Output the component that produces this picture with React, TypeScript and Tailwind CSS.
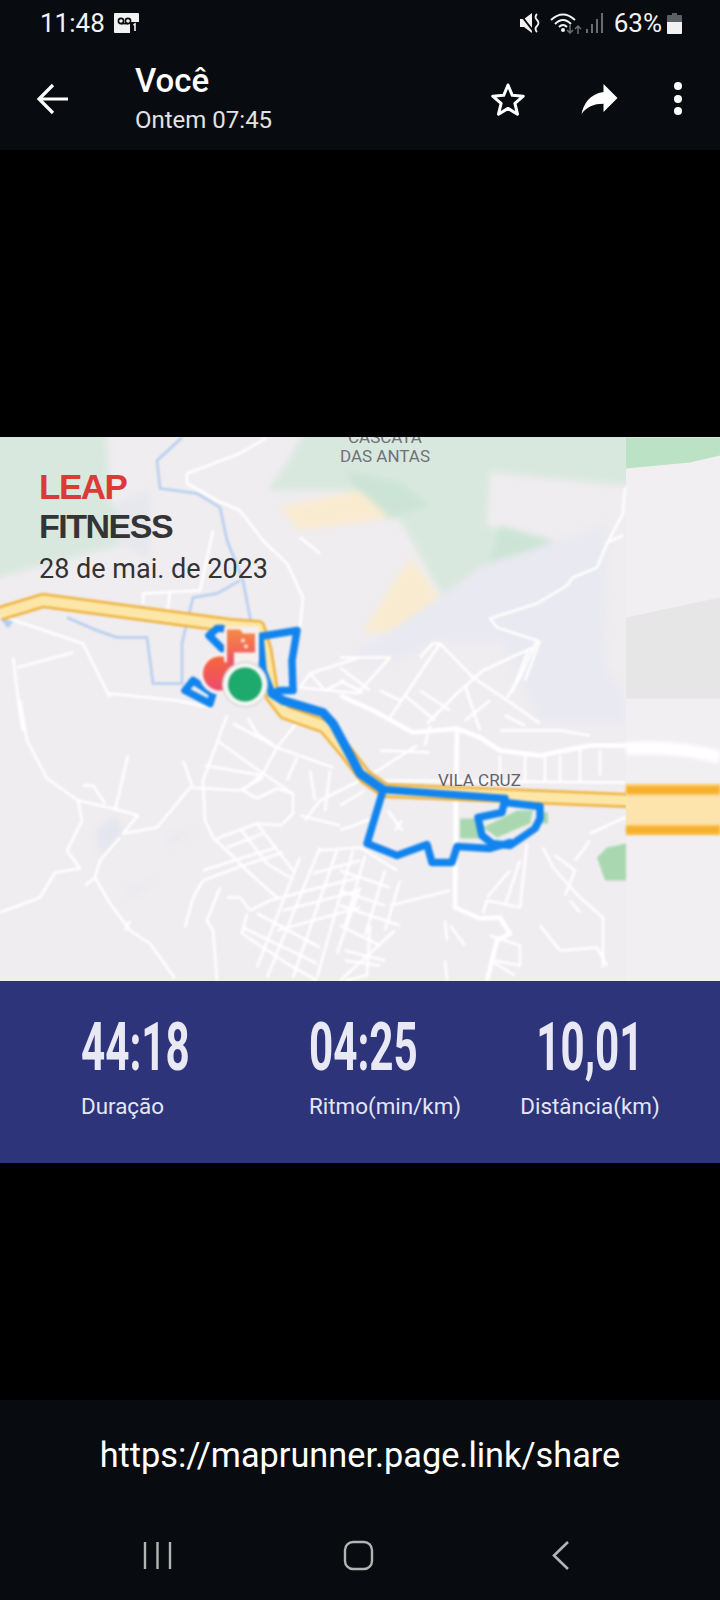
const majorRoads = [
  "340,695 373,710 413,732 457,728 480,737 500,750 540,755 590,745 627,745",
  "457,728 456,790 455,907 480,918 500,917 510,933 497,940 487,980",
];
const minorRoads = [
  "0,615 83,643 100,677 110,697",
  "20,700 27,740 47,778 78,800 113,808 138,815 123,833 157,827 190,787 240,790 263,777",
  "267,437 240,453 187,473 187,483 217,500 240,510 263,540 287,563 303,597 300,627",
  "213,530 200,590 143,593 143,603",
  "170,590 167,617",
  "300,537 320,553",
  "17,667 73,652",
  "13,657 20,713 23,730",
  "110,693 177,700 210,707",
  "360,657 310,673 300,687 360,693",
  "310,673 325,690 345,680",
  "78,800 82,820 67,850 80,868 55,872 40,897 0,912",
  "128,755 115,810",
  "83,785 93,785 105,803",
  "120,837 100,860 95,877 110,903 130,930 150,943 175,978",
  "95,877 85,885",
  "130,920 125,930",
  "183,760 192,785",
  "227,715 203,780 205,820 213,837 240,863 250,873 277,897",
  "233,723 277,747 333,767",
  "217,740 263,773 293,793 293,813 283,823",
  "205,765 263,775",
  "277,747 263,773 243,790 257,798 277,788 293,793",
  "297,722 277,747",
  "297,757 287,780",
  "248,718 257,733 277,747",
  "310,770 315,800",
  "330,770 325,810",
  "360,780 320,800 305,820",
  "300,815 340,825",
  "203,870 240,858 277,847",
  "217,838 257,823 283,825",
  "203,880 243,865 283,852",
  "227,847 263,833",
  "240,828 267,863 290,877",
  "257,823 293,870",
  "203,880 193,897 185,927",
  "220,887 207,920 213,930 217,980",
  "227,897 240,897 250,910",
  "247,913 242,933 287,963 317,980",
  "250,910 270,900 320,887",
  "320,847 267,977",
  "337,850 293,977",
  "300,857 257,967",
  "353,850 317,977",
  "360,887 337,953",
  "320,850 360,847",
  "313,873 360,860",
  "307,890 360,877",
  "283,910 360,890",
  "277,930 360,907",
  "243,927 317,963",
  "257,913 320,947",
  "360,847 397,870",
  "340,870 390,887",
  "340,890 385,905",
  "365,855 345,925",
  "385,870 365,935",
  "400,880 385,930",
  "340,905 400,925",
  "340,925 380,945",
  "390,905 450,890",
  "395,930 340,980",
  "370,925 367,975 345,980",
  "345,950 385,960",
  "625,487 623,513 607,543 597,567 573,577 567,585 537,603 490,618 497,627 537,640 520,677 507,697",
  "607,542 623,535",
  "420,657 433,643 440,643 473,677 503,697 540,723",
  "440,643 390,717",
  "533,647 483,670 457,693 427,723",
  "540,640 525,680",
  "528,650 512,692",
  "340,657 390,657 360,690",
  "340,680 363,692",
  "340,667 370,690",
  "420,690 450,710",
  "405,695 435,720",
  "465,685 480,730",
  "500,730 560,730 590,735",
  "490,700 465,720",
  "505,715 525,725",
  "380,690 400,700",
  "430,725 425,745",
  "380,750 430,752",
  "370,775 417,745",
  "380,780 625,782",
  "500,755 500,782",
  "525,755 525,782",
  "545,755 545,782",
  "560,755 560,782",
  "580,748 580,782",
  "600,750 600,775",
  "340,805 365,790",
  "340,830 380,815",
  "388,810 402,830",
  "402,820 395,830",
  "527,843 520,907 487,900 483,913",
  "510,870 487,897",
  "520,860 505,905",
  "543,847 553,867 580,897 603,917 603,967",
  "555,855 575,870 565,895",
  "590,833 625,817",
  "575,860 590,840",
  "540,925 560,950 597,947",
  "597,947 607,965",
  "570,900 580,912",
  "490,935 520,945 520,965 495,960",
  "490,960 515,975",
  "450,925 465,945",
  "445,920 447,940",
  "345,960 380,965",
  "445,960 447,980",
];

const HIGHWAY = "M0 613 L43 600 L230 625 L258 627 L265 650 L272 695 L285 712 L325 726 L345 750 L365 776 L385 790 L480 794 L627 800";

const MapDrawing = () => (
  <svg viewBox="0 437 720 543" className="block h-full w-full">
    <defs>
      <linearGradient id="flag" x1="0" y1="0" x2="0" y2="1">
        <stop offset="0" stopColor="#f58a42" />
        <stop offset="1" stopColor="#ef4f6a" />
      </linearGradient>
      <linearGradient id="redDot" x1="0" y1="0" x2="0" y2="1">
        <stop offset="0" stopColor="#f5683a" />
        <stop offset="1" stopColor="#ee4a6e" />
      </linearGradient>
    </defs>
    <rect x="0" y="437" width="720" height="543" fill="#f0edf0" />
    {/* land cover */}
    <g className="blur-[3px]">
      <polygon points="-20,420 107,420 110,500 147,540 100,550 -20,582" fill="#d9e8df" />
      <polygon points="310,420 640,420 640,487 490,472 487,525 563,543 480,567 443,597 400,520 360,490 267,490 285,465" fill="#d9e8df" />
      <polygon points="345,470 400,482 430,505 385,520 360,495" fill="#cce4d6" />
      <polygon points="490,560 563,543 500,525" fill="#cce4d6" />
      <polygon points="280,507 360,490 390,517 300,530" fill="#f9ebd0" />
      <polygon points="410,557 442,600 413,630 363,632" fill="#f9ebd0" />
      <polygon points="480,567 607,523 604,660 625,700 625,722 540,720 500,640 440,640 400,660 345,660 420,610" fill="#e9e9f1" />
      <polygon points="120,500 150,490 150,560 115,540" fill="#e6e8ee" />
      <polygon points="95,830 115,815 125,830 100,855" fill="#e4e6ee" />
      <polygon points="170,835 195,828 170,845" fill="#e8e9ee" />
      <polygon points="125,890 155,880 130,898" fill="#e8e9ee" />
    </g>
    {/* right strip */}
    <rect x="626" y="437" width="94" height="543" fill="#f1eff1" />
    <polygon points="626,437 720,437 720,455 690,462 626,468" fill="#bce2c5" />
    <polygon points="626,617 720,597 720,698 626,698" fill="#e6e6e6" />
    <g className="blur-[0.8px]">
      {/* parks */}
      <polygon points="460,818 476,818 485,838 460,838" fill="#a9d8b0" />
      <polygon points="483,827 517,810 533,810 530,823 497,837" fill="#a9d8b0" />
      <polygon points="541,812 548,812 548,823 541,823" fill="#a9d8b0" />
      <polygon points="597,857 607,847 626,843 626,880 605,880" fill="#a9d8b0" />
      {/* water */}
      <polyline points="182,437 157,460 160,488 197,493 220,507 227,540 243,580 252,627" fill="none" stroke="#b4cdf0" strokeWidth="2.5" />
      <polyline points="240,580 217,593 193,597 182,643 182,683 153,683 147,637 117,637 97,630 67,617" fill="none" stroke="#b4cdf0" strokeWidth="2.5" />
      <polygon points="0,618 14,620 8,628" fill="#b4cdf0" />
      {/* roads */}
      {minorRoads.map((p) => (
        <polyline key={p} points={p} fill="none" stroke="#ffffff" strokeWidth="2.6" strokeLinejoin="round" />
      ))}
      {majorRoads.map((p) => (
        <polyline key={p} points={p} fill="none" stroke="#ffffff" strokeWidth="4.6" strokeLinejoin="round" />
      ))}
      {/* highway */}
      <path d={HIGHWAY} fill="none" stroke="#eeb13c" strokeWidth="15" strokeLinejoin="round" />
      <path d={HIGHWAY} fill="none" stroke="#fde7a8" strokeWidth="10" strokeLinejoin="round" />
      {/* route */}
      <g fill="none" stroke="#1284ee" strokeWidth="7.5" strokeLinejoin="round" strokeLinecap="round">
        <path d="M383 789 L505 798 L502 812 L478 817 L482 835 L492 843 L510 845 L535 828 L540 818 L540 806 L505 802" />
        <path d="M383 790 L367 843 L397 855 L427 844 L432 862 L452 862 L457 846 L490 848 L510 842" />
        <path d="M272 693 L283 700 L323 712 L333 723 L360 773 L383 789" strokeWidth="9" />
        <path d="M260 636 L297 630 L292 660 L293 690 L280 690 L272 693 L263 670 L260 636" />
        <path d="M222 628 L217 628 L209 635 L222 648" />
        <path d="M193 680 L185 690 L210 703 L213 693 Z" />
      </g>
      {/* markers */}
      <circle cx="220" cy="673" r="21" fill="#f6eeee" />
      <circle cx="220" cy="673" r="17" fill="url(#redDot)" />
      <rect x="224" y="626" width="35" height="36" rx="2" fill="#f7eeee" />
      <path d="M227 629 L240 629 L243 633 L255 633 L255 652 L234 652 L234 665 L227 665 Z" fill="url(#flag)" />
      <circle cx="243" cy="640" r="2" fill="#fde2d4" />
      <circle cx="246" cy="646" r="2" fill="#fde2d4" />
      <circle cx="245" cy="684" r="23" fill="#d6d6d6" />
      <circle cx="245" cy="684" r="21.5" fill="#f5f7f5" />
      <circle cx="245" cy="684" r="17" fill="#1eaa6c" />
    </g>
    {/* stretched edge of the picture */}
    <path d="M626 748 Q680 745 720 757" fill="none" stroke="#ffffff" strokeWidth="13" className="blur-[2px]" />
    <rect x="626" y="783" width="94" height="52" fill="#fde3ac" />
    <rect x="626" y="785" width="94" height="9" fill="#f6b02c" className="blur-[1.5px]" />
    <rect x="626" y="825" width="94" height="9" fill="#f6b02c" className="blur-[1.5px]" />
  </svg>
);

const VoicemailIcon = () => (
  <svg width="25" height="20" viewBox="0 0 25 20" className="block">
    <rect width="25" height="20" rx="1" fill="#f2f2f2" />
    <circle cx="7" cy="8" r="2.6" fill="none" stroke="#080c10" strokeWidth="1.6" />
    <circle cx="14" cy="8" r="2.6" fill="none" stroke="#080c10" strokeWidth="1.6" />
    <path d="M7 10.6h7" stroke="#080c10" strokeWidth="1.6" />
    <rect x="16" y="9" width="9" height="11" fill="#080c10" />
    <path d="M19.5 12 L21 11 V18" fill="none" stroke="#f2f2f2" strokeWidth="1.6" />
  </svg>
);

const MuteIcon = () => (
  <svg width="22" height="20" viewBox="0 0 22 20" className="block">
    <path d="M1 6h4l8-6v20l-8-6H1z" fill="#f2f2f2" />
    <path d="M1 1 L15 19" stroke="#080c10" strokeWidth="2" />
    <path d="M18 1 Q15 4 18 7 Q21 10 18 13 Q15 16 18 19" fill="none" stroke="#f2f2f2" strokeWidth="1.8" />
  </svg>
);

const WifiIcon = () => (
  <svg width="32" height="22" viewBox="0 0 32 22" className="block">
    <path d="M1 8 Q13 -3 25 8" fill="none" stroke="#f2f2f2" strokeWidth="2" />
    <path d="M5 12 Q13 4 21 12" fill="none" stroke="#f2f2f2" strokeWidth="2" />
    <path d="M9 15 Q13 11 17 15" fill="none" stroke="#f2f2f2" strokeWidth="2" />
    <circle cx="13" cy="18" r="2" fill="#f2f2f2" />
    <path d="M20 13v8m-3-3 3 3 3-3" fill="none" stroke="#6b6f72" strokeWidth="1.5" />
    <path d="M28 22v-8m-3 3 3-3 3 3" fill="none" stroke="#6b6f72" strokeWidth="1.5" />
  </svg>
);

const SignalIcon = () => (
  <svg width="18" height="20" viewBox="0 0 18 20" className="block">
    <rect x="0" y="16" width="2" height="4" fill="#6a6d70" />
    <rect x="5" y="11" width="2" height="9" fill="#6a6d70" />
    <rect x="10" y="6" width="2" height="14" fill="#6a6d70" />
    <rect x="15" y="0" width="2" height="20" fill="#6a6d70" />
  </svg>
);

const BatteryIcon = () => (
  <svg width="15" height="21" viewBox="0 0 15 21" className="block">
    <path d="M5 0h5v2h4a1 1 0 0 1 1 1v17a1 1 0 0 1-1 1H1a1 1 0 0 1-1-1V3a1 1 0 0 1 1-1h4z" fill="#5d6062" />
    <path d="M0 9h15v11a1 1 0 0 1-1 1H1a1 1 0 0 1-1-1z" fill="#f2f2f2" />
  </svg>
);

const Stat = ({ value, label, className, center }: { value: string; label: string; className: string; center?: boolean }) => (
  <div className={`flex flex-col ${center ? "items-center" : "items-start"} ${className}`}>
    <div className={`flex h-[62px] w-[108px] items-center ${center ? "justify-center" : ""}`}>
      <span className={`block whitespace-nowrap text-[66px] leading-[62px] font-bold text-[#e8e9f5] scale-x-[0.64] ${center ? "origin-center" : "origin-left"}`}>
        {value}
      </span>
    </div>
    <div className="mt-[14px] whitespace-nowrap text-[22.4px] leading-[26px] text-[#e4e6f4]">{label}</div>
  </div>
);

export default function App() {
  return (
    <div className="flex h-[1600px] w-[720px] flex-col overflow-hidden bg-black font-['Roboto',sans-serif]">
      <header className="h-[150px] shrink-0 bg-[#080c10] text-white">
        <div className="flex h-[46px] items-center pl-[40px] pr-[38px]">
          <span className="text-[26px] leading-none text-[#f2f2f2]">11:48</span>
          <span className="ml-[9px]"><VoicemailIcon /></span>
          <div className="ml-auto flex items-center">
            <MuteIcon />
            <span className="ml-[9px]"><WifiIcon /></span>
            <span className="ml-[4px]"><SignalIcon /></span>
            <span className="ml-[10px] text-[26px] leading-none text-[#f2f2f2]">63%</span>
            <span className="ml-[5px]"><BatteryIcon /></span>
          </div>
        </div>
        <div className="flex items-center pr-[38px] pt-[17px]">
          <svg width="34" height="32" viewBox="0 0 34 32" className="ml-[36px] block" fill="none" stroke="#ffffff" strokeWidth="3.2">
            <path d="M32 16H4M17 2 3 16l14 14" />
          </svg>
          <div className="ml-[65px]">
            <div className="text-[33px] leading-[36px] font-medium">Você</div>
            <div className="mt-[7px] text-[24px] leading-[28px] text-[#e2e2e2]">Ontem 07:45</div>
          </div>
          <svg width="36" height="34" viewBox="0 0 36 34" className="ml-auto block" fill="none" stroke="#ffffff" strokeWidth="3" strokeLinejoin="round">
            <path d="M18 3l4.3 10.3 11 .9-8.4 7.2 2.6 10.8L18 26.4 8.5 32.2l2.6-10.8-8.4-7.2 11-.9z" />
          </svg>
          <svg width="37" height="30" viewBox="3 5 18 15" className="ml-[55px] block" fill="#ffffff">
            <path d="M14 9V5l7 7-7 7v-4.1c-5 0-8.5 1.6-11 5.1 1-5 4-10 11-11z" />
          </svg>
          <div className="ml-[56px] flex flex-col gap-[4.5px]">
            <span className="block h-[8px] w-[8px] rounded-full bg-white" />
            <span className="block h-[8px] w-[8px] rounded-full bg-white" />
            <span className="block h-[8px] w-[8px] rounded-full bg-white" />
          </div>
        </div>
      </header>

      <div className="h-[287px] shrink-0 bg-black" />

      <main className="relative h-[544px] shrink-0 overflow-hidden bg-[#f0edf0]">
        <MapDrawing />
        <div className="absolute left-[39px] top-[32px] font-['Liberation_Sans',sans-serif] text-[35px] leading-[36px] font-bold tracking-[-1.5px] text-[#dc3a36]">LEAP</div>
        <div className="absolute left-[39px] top-[71px] font-['Liberation_Sans',sans-serif] text-[34px] leading-[36px] font-bold tracking-[-1.5px] text-[#343434]">FITNESS</div>
        <div className="absolute left-[39px] top-[116px] whitespace-nowrap text-[27px] leading-[32px] text-[#333333]">28 de mai. de 2023</div>
        <div className="absolute left-[330px] top-[-9px] w-[110px] whitespace-nowrap text-center text-[17px] leading-[19px] text-[#6e7278]">CASCATA<br />DAS ANTAS</div>
        <div className="absolute left-[438px] top-[333px] whitespace-nowrap text-[17px] leading-[20px] text-[#5f6368]">VILA CRUZ</div>
      </main>

      <section className="flex h-[182px] shrink-0 bg-[#2d347a] pl-[81px] pt-[36px]">
        <Stat value="44:18" label="Duração" className="w-[228px]" />
        <Stat value="04:25" label="Ritmo(min/km)" className="w-[212px]" />
        <Stat value="10,01" label="Distância(km)" className="w-[138px]" center />
      </section>

      <div className="h-[237px] shrink-0 bg-black" />

      <footer className="flex h-[200px] shrink-0 flex-col bg-[#080c10]">
        <div className="mt-[33px] text-center text-[34.3px] leading-[44px] text-white">https://maprunner.page.link/share</div>
        <nav className="mt-[63px] flex items-center">
          <svg width="30" height="29" viewBox="0 0 30 29" className="ml-[143px] block" stroke="#b4b4b4" strokeWidth="2.4">
            <path d="M2 1v27M14.500 1v27M27 1v27" />
          </svg>
          <svg width="31" height="31" viewBox="0 0 31 31" className="ml-[170px] block" fill="none" stroke="#b4b4b4" strokeWidth="2.4">
            <rect x="2" y="2" width="27" height="27" rx="8" />
          </svg>
          <svg width="18" height="31" viewBox="0 0 18 31" className="ml-[178px] block" fill="none" stroke="#b4b4b4" strokeWidth="2.6">
            <path d="M16 2 2 15.500 16 29" />
          </svg>
        </nav>
      </footer>
    </div>
  );
}
